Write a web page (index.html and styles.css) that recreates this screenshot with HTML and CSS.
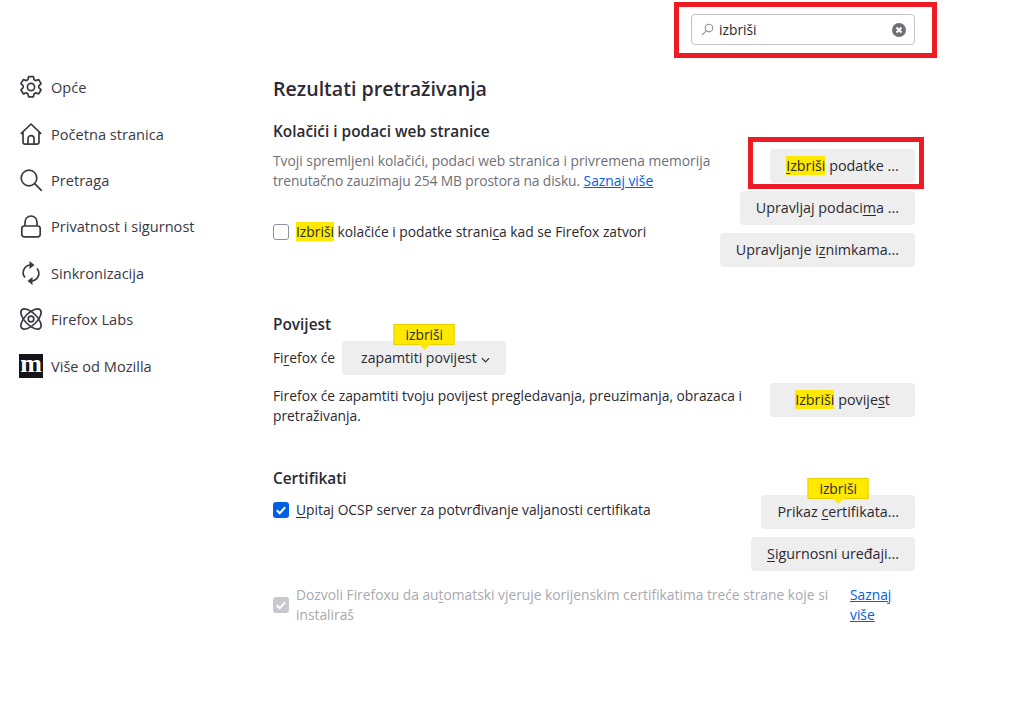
FILE: index.html
```html
<!DOCTYPE html>
<html lang="hr">
<head>
    <meta charset="UTF-8">
    <meta name="viewport" content="width=device-width, initial-scale=1.0">
    <title>Postavke</title>
    <link rel="stylesheet" href="styles.css">
</head>
<body>
    <div class="top">
        <div class="search-frame">
            <div class="search-box">
                <svg class="search-icon" viewBox="0 0 16 16" width="16" height="16"><circle cx="9.8" cy="6.2" r="4.7"/><path d="M6.4 9.6L1.2 14.8"/></svg>
                <span class="search-text">izbriši</span>
                <svg class="clear-icon" viewBox="0 0 14 14" width="14" height="14"><circle cx="7" cy="7" r="7"/><path d="M4.5 4.500l5 5M9.500 4.500l-5 5"/></svg>
            </div>
        </div>
    </div>

    <div class="layout">
        <nav class="sidebar">
            <a class="nav-item">
                <svg viewBox="0 0 24 24" width="24" height="24"><circle cx="12" cy="12" r="3.6"/><path d="M9.6 1.6h4.8l.7 3.1 1.6.9 3-1 2.4 4.1-2.3 2.1v1.9l2.3 2.1-2.4 4.1-3-1-1.6.9-.7 3.1H9.6l-.7-3.1-1.6-.9-3 1-2.4-4.1 2.3-2.1v-1.9L1.9 8.7l2.400-4.100 3 1 1.600-.9z" stroke-linejoin="round"/></svg>
                <span>Opće</span>
            </a>
            <a class="nav-item">
                <svg viewBox="0 0 24 24" width="24" height="24"><path d="M1.800 11.800L12 2l10.200 9.800M4 10v10c0 1.300.9 2.200 2.200 2.200h11.600c1.300 0 2.200-.9 2.200-2.200V10M9 22v-5.500c0-1.600 1.200-2.800 3-2.800s3 1.200 3 2.800V22" stroke-linejoin="round"/></svg>
                <span>Početna stranica</span>
            </a>
            <a class="nav-item">
                <svg viewBox="0 0 24 24" width="24" height="24"><circle cx="10" cy="10" r="7.800"/><path d="M15.700 15.700L22.800 22.800"/></svg>
                <span>Pretraga</span>
            </a>
            <a class="nav-item">
                <svg viewBox="0 0 24 24" width="24" height="24"><path d="M6 12V8a6 6 0 0 1 12 0v4"/><rect x="2.800" y="12" width="18.400" height="10.800" rx="2.500"/></svg>
                <span>Privatnost i sigurnost</span>
            </a>
            <a class="nav-item">
                <svg viewBox="0 0 24 24" width="24" height="24"><path d="M6 16.500A7.600 7.600 0 0 1 12 4h1M18 7.500A7.600 7.600 0 0 1 12 20h-1"/><path class="solid" d="M10.500 0l5 4-5 4zM13.500 16l-5 4 5 4z"/></svg>
                <span>Sinkronizacija</span>
            </a>
            <a class="nav-item">
                <svg viewBox="0 0 24 24" width="24" height="24"><ellipse cx="12" cy="12" rx="13" ry="6" transform="rotate(45 12 12)"/><ellipse cx="12" cy="12" rx="13" ry="6" transform="rotate(-45 12 12)"/><circle cx="12" cy="12" r="2.800"/></svg>
                <span>Firefox Labs</span>
            </a>
            <a class="nav-item">
                <span class="moz-logo">m</span>
                <span>Više od Mozilla</span>
            </a>
        </nav>

        <main class="content">
            <h1>Rezultati pretraživanja</h1>

            <section class="cookies">
                <h2>Kolačići i podaci web stranice</h2>
                <div class="row">
                    <div class="row-text">
                        <p class="muted">Tvoji spremljeni kolačići, podaci web stranica i privremena memorija <span class="tight">trenutačno zauzimaju 254 MB prostora na disku.</span> <a class="link">Saznaj više</a></p>
                        <label class="check check-cookies"><span class="box"></span><span><mark>Izbriši</mark> kolačiće i podatke strani<u>c</u>a kad se Firefox zatvori</span></label>
                    </div>
                    <div class="buttons">
                        <button class="btn wide"><span class="annotation"></span><mark><u>I</u>zbriši</mark> podatke ...</button>
                        <button class="btn">Upravljaj podaci<u>m</u>a ...</button>
                        <button class="btn">Upravljanje i<u>z</u>nimkama...</button>
                    </div>
                </div>
            </section>

            <section class="history">
                <h2>Povijest</h2>
                <div class="history-select">
                    <span>Fi<u>r</u>efox će</span>
                    <button class="btn select"><span class="bubble">izbriši</span>zapamtiti povijest <svg viewBox="0 0 10 6" width="9" height="6"><path d="M1 1l4 4 4-4"/></svg></button>
                </div>
                <div class="row">
                    <p class="row-text history-text">Firefox će zapamtiti tvoju povijest pregledavanja, preuzimanja, obrazaca i pretraživanja.</p>
                    <div class="buttons">
                        <button class="btn wide"><mark>Izbriši</mark> povije<u>s</u>t</button>
                    </div>
                </div>
            </section>

            <section class="certs">
                <h2>Certifikati</h2>
                <div class="row">
                    <label class="check check-ocsp"><span class="box checked"><svg viewBox="0 0 16 16" width="16" height="16"><path d="M3.800 8.300l2.900 2.900 5.500-6"/></svg></span><span><u>U</u>pitaj OCSP server za potvrđivanje valjanosti certifikata</span></label>
                    <div class="buttons">
                        <button class="btn"><span class="bubble">izbriši</span>Prikaz <u>c</u>ertifikata...</button>
                        <button class="btn"><u>S</u>igurnosni uređaji...</button>
                    </div>
                </div>
                <div class="row auto-trust">
                    <label class="check disabled"><span class="box checked"><svg viewBox="0 0 16 16" width="16" height="16"><path d="M3.800 8.300l2.900 2.900 5.500-6"/></svg></span><span>Dozvoli Firefoxu da au<u>t</u>omatski vjeruje korijenskim certifikatima treće strane koje si instaliraš</span></label>
                    <a class="link side-link">Saznaj više</a>
                </div>
            </section>
        </main>
    </div>
</body>
</html>
```

FILE: styles.css
```css
* {
    box-sizing: border-box;
}
body {
    margin: 0;
    height: 703px;
    overflow: hidden;
    background: white;
    color: #2b2a33;
    font-family: "Open Sans", "Noto Sans", sans-serif;
    font-size: 13.8px;
    line-height: 20px;
}
svg {
    fill: none;
    stroke: currentColor;
    stroke-width: 1.7;
    flex: none;
}
svg .solid {
    fill: currentColor;
    stroke: none;
}
mark {
    background: #ffe900;
    color: inherit;
}
u {
    text-underline-offset: 2px;
}
p {
    margin: 0;
}

/* search */
.top {
    display: flex;
    justify-content: flex-end;
    padding: 2px 87px 0 0;
}
.search-frame {
    width: 263px;
    height: 56px;
    border: 5px solid #ed1c24;
    padding: 7px 17px 0 12px;
}
.search-box {
    display: flex;
    align-items: center;
    height: 31px;
    border: 1px solid #c4c4c8;
    border-radius: 4px;
    padding: 0 8px 0 9px;
}
.search-icon {
    color: #8f8f9d;
    stroke-width: 1.3;
    width: 13px;
    height: 13px;
}
.search-text {
    flex: 1;
    margin-left: 5px;
}
.clear-icon {
    stroke: none;
}
.clear-icon circle {
    fill: #6f6f78;
    stroke: none;
}
.clear-icon path {
    stroke: white;
    stroke-width: 2;
}

/* layout */
.layout {
    display: flex;
}
.sidebar {
    width: 273px;
    flex: none;
    padding: 6px 0 0 19px;
}
.nav-item {
    display: flex;
    align-items: center;
    gap: 8px;
    height: 46.4px;
    font-size: 14.6px;
    color: #3a3944;
}
.moz-logo {
    width: 24px;
    height: 24px;
    background: #15141a;
    color: white;
    font-family: "Liberation Serif", serif;
    font-weight: bold;
    font-size: 26px;
    line-height: 20px;
    text-align: center;
    flex: none;
}
.content {
    width: 642px;
    flex: none;
}
h1 {
    font-size: 19.6px;
    font-weight: 600;
    line-height: 26px;
    margin: 18px 0 0;
}
h2 {
    font-size: 15.4px;
    font-weight: 600;
    line-height: 20px;
    margin: 0;
}
.row {
    display: flex;
    justify-content: space-between;
    align-items: flex-start;
}
.row-text {
    width: 450px;
}
.muted {
    color: #6f6f78;
}
.tight {
    letter-spacing: -0.11px;
}
.link {
    color: #0061e0;
    text-decoration: underline;
}
.buttons {
    display: flex;
    flex-direction: column;
    align-items: flex-end;
    gap: 8px;
}
.btn {
    position: relative;
    height: 34px;
    border: none;
    border-radius: 4px;
    background: #eeeeee;
    color: #2b2a33;
    font: inherit;
    font-size: 14.3px;
    font-weight: 500;
    padding: 0 16px;
    white-space: nowrap;
}
.btn.wide {
    width: 145px;
    padding: 0;
}

/* overlays */
.annotation {
    position: absolute;
    left: -22px;
    right: -9px;
    top: -12px;
    bottom: -6px;
    border: 5px solid #ed1c24;
}
.bubble {
    position: absolute;
    left: 50%;
    top: -17px;
    transform: translateX(-50%);
    width: 61px;
    height: 21px;
    background: #ffe900;
    border: 1px solid #e6cf00;
    font-size: 13.8px;
    font-weight: 400;
    line-height: 19px;
    text-align: center;
}
.bubble::after {
    content: "";
    position: absolute;
    left: 50%;
    bottom: -6px;
    margin-left: -6px;
    border: 6px solid transparent;
    border-bottom: 0;
    border-top-color: #ffe900;
}

/* checkboxes */
.check {
    display: flex;
    gap: 7px;
}
.box {
    width: 16px;
    height: 16px;
    flex: none;
    margin-top: 2px;
    border: 1px solid #8f8f9d;
    border-radius: 3px;
}
.box.checked {
    background: #0061e0;
    border: none;
    color: white;
}
.box.checked svg {
    display: block;
    stroke-width: 2;
}
.disabled {
    color: #a9a9af;
    width: 560px;
    align-items: center;
}
.disabled .box.checked {
    background: #c8c8ce;
    margin-top: 0;
}

/* sections */
.cookies {
    margin-top: 20px;
}
.cookies .row {
    margin-top: 7px;
}
.check-cookies {
    margin-top: 31px;
}
.cookies .muted {
    margin-top: 2px;
}
.history {
    margin-top: 48px;
}
.history-select {
    display: flex;
    align-items: center;
    gap: 7px;
    margin-top: 6px;
}
.select {
    font-size: 14.1px;
    padding: 0 16px 0 19px;
}
.select svg {
    stroke-width: 1.3;
    margin-left: 1px;
}
.history .row {
    margin-top: 8px;
}
.history .row-text {
    width: 480px;
}
.history-text {
    margin-top: 3px;
}
.certs {
    margin-top: 43px;
}
.certs .row {
    margin-top: 6px;
}
.check-ocsp {
    margin-top: 5px;
}
.certs .auto-trust {
    margin-top: 14px;
}
.side-link {
    width: 65px;
}
```
